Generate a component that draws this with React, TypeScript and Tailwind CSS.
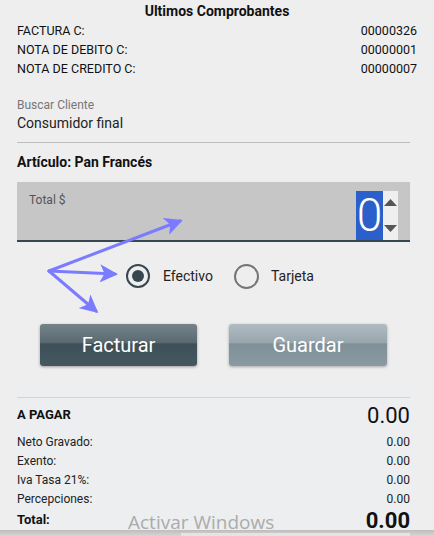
import React from "react";

function Row({ label, value }: { label: string; value: string }) {
  return (
    <div className="flex justify-between h-[19px] items-center text-[12.5px] text-[#111]">
      <span>{label}</span>
      <span>{value}</span>
    </div>
  );
}

function SumRow({ label, value }: { label: string; value: string }) {
  return (
    <div className="flex justify-between h-[19px] items-center text-[12px] text-[#222]">
      <span>{label}</span>
      <span>{value}</span>
    </div>
  );
}

export default function App() {
  return (
    <div
      className="relative w-[434px] h-[536px] overflow-hidden bg-[#eeeeee]"
      style={{ fontFamily: "Roboto, 'Liberation Sans', sans-serif" }}
    >
      <div className="px-[17px]">
        <div className="h-[22px] flex items-center justify-center text-[14px] font-bold text-[#111]">
          Ultimos Comprobantes
        </div>
        <div>
          <Row label="FACTURA C:" value="00000326" />
          <Row label="NOTA DE DEBITO C:" value="00000001" />
          <Row label="NOTA DE CREDITO C:" value="00000007" />
        </div>
        <div className="mt-[18px] text-[12px] text-[#777] h-[16px] leading-[16px]">Buscar Cliente</div>
        <div className="text-[14px] text-[#222] h-[20px] leading-[20px]">Consumidor final</div>
        <div className="mt-[9px] mr-[7px] h-px bg-[#bdbdbd]" />
        <div className="mt-[10px] h-[18px] leading-[18px] text-[14px] font-bold text-[#111]">
          Artículo: Pan Francés
        </div>
        <div className="mt-[11px] mr-[7px] h-[60px] bg-[#c6c6c6] border-b-2 border-[#37474f] flex">
          <div className="pl-[12px] pt-[9px] text-[12px] text-[#555] flex-1">Total $</div>
          <div className="flex mt-[9px] mr-[12px]">
            <div className="w-[27px] h-[49px] bg-[#2b5fc9] text-white text-[46px] leading-[49px] flex justify-center font-light">
              0
            </div>
            <div className="w-[15px] h-[49px] bg-[#efefef] flex flex-col items-center justify-between py-[8px]">
              <svg width="13" height="7" viewBox="0 0 13 7"><polygon points="6.5,0 13,7 0,7" fill="#555" /></svg>
              <svg width="13" height="7" viewBox="0 0 13 7"><polygon points="0,0 13,0 6.5,7" fill="#555" /></svg>
            </div>
          </div>
        </div>
        <div className="mt-[22px] flex items-center h-[24px] pl-[109px] text-[14px] text-[#222]">
          <div className="w-[24px] h-[24px] rounded-full border-[2.5px] border-[#37474f] flex items-center justify-center">
            <div className="w-[12px] h-[12px] rounded-full bg-[#37474f]" />
          </div>
          <span className="ml-[13px]">Efectivo</span>
          <div className="ml-[21px] w-[25px] h-[25px] rounded-full border-[2.5px] border-[#757575]" />
          <span className="ml-[12px]">Tarjeta</span>
        </div>
        <div className="mt-[36px] flex pl-[23px] gap-[32px]">
          <button className="w-[157px] h-[42px] rounded-[3px] text-white text-[20px] shadow-[0_1px_3px_rgba(0,0,0,0.35)] bg-[linear-gradient(to_bottom,#758389_0%,#5a6870_45%,#3e4f58_47%,#455860_100%)]">
            Facturar
          </button>
          <button className="w-[158px] h-[42px] rounded-[3px] text-white text-[20px] shadow-[0_1px_3px_rgba(0,0,0,0.3)] bg-[linear-gradient(to_bottom,#b0bcc2_0%,#97a5ac_45%,#7f9099_47%,#8a9aa2_100%)]">
            Guardar
          </button>
        </div>
      </div>
      <div className="mt-[22px] ml-[10px] mr-[16px] bg-[#eceef0] pl-[7px] pr-[8px] pt-[9px] h-[150px]">
        <div className="h-px bg-[#d0d4d8]" />
        <div className="flex justify-between items-center h-[34px]">
          <span className="text-[13px] font-bold text-[#111]">A PAGAR</span>
          <span className="text-[22px] text-[#111]">0.00</span>
        </div>
        <SumRow label="Neto Gravado:" value="0.00" />
        <SumRow label="Exento:" value="0.00" />
        <SumRow label="Iva Tasa 21%:" value="0.00" />
        <SumRow label="Percepciones:" value="0.00" />
        <div className="flex justify-between items-center h-[24px]">
          <span className="text-[13px] font-bold text-[#111]">Total:</span>
          <span className="text-[22px] font-bold text-[#111]">0.00</span>
        </div>
      </div>
      <div
        className="absolute left-[128px] top-[508px] text-[19px] text-[#ababab]"
        style={{ fontFamily: "'Open Sans', 'Liberation Sans', sans-serif" }}
      >
        Activar Windows
      </div>
      <div className="absolute left-0 right-0 top-[530px] h-[6px] bg-[linear-gradient(to_bottom,#bdbdbd,#d6d6d6)]">
        <div className="absolute left-[181px] right-[24px] top-[3px] h-[3px] bg-[#e4e4e4]" />
      </div>
      <svg className="absolute left-0 top-0" width="434" height="536" viewBox="0 0 434 536">
        <defs>
          <marker id="ah" markerWidth="6" markerHeight="6" refX="5" refY="3" orient="auto" markerUnits="strokeWidth">
            <path d="M0,0 L6,3 L0,6 L1.5,3 Z" fill="#7b7bff" />
          </marker>
        </defs>
        <g stroke="#7b7bff" strokeWidth="3" fill="none" strokeLinecap="round">
          <line x1="49" y1="271" x2="180" y2="221" markerEnd="url(#ah)" />
          <line x1="49" y1="271" x2="115" y2="274" markerEnd="url(#ah)" />
          <line x1="49" y1="271" x2="96" y2="311" markerEnd="url(#ah)" />
        </g>
      </svg>
    </div>
  );
}
